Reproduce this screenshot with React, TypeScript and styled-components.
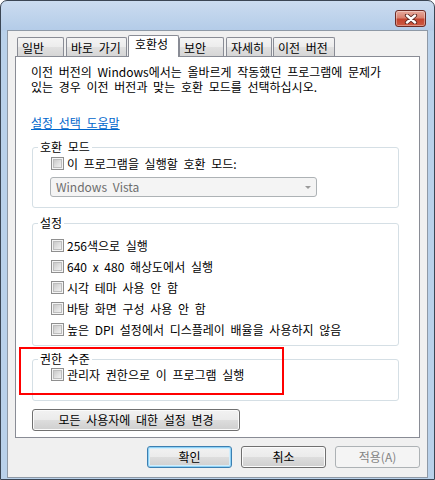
import React from 'react';
import styled, { createGlobalStyle, css } from 'styled-components';

const GlobalStyle = createGlobalStyle`
  html, body {
    margin: 0;
    padding: 0;
    background: #ffffff;
  }
  body {
    font-family: 'Noto Sans CJK KR', 'Noto Sans', sans-serif;
    font-size: 12px;
    line-height: 14px;
    color: #000000;
    word-spacing: 3px;
  }
  * {
    box-sizing: border-box;
  }
`;

const Window = styled.div`
  width: 435px;
  height: 480px;
  border: 1px solid #3b4654;
  border-radius: 7px 7px 0 0;
  background: linear-gradient(to bottom, #cbdcf0 0, #b4cce8 29px, #b9d1ea 30px, #b9d1ea 100%);
  display: flex;
  flex-direction: column;
`;

const TitleBar = styled.div`
  height: 29px;
  display: flex;
  justify-content: flex-end;
  align-items: flex-start;
  padding: 9px 8px 0 0;
`;

const CloseButton = styled.div`
  width: 31px;
  height: 17px;
  border: 1px solid #6c2b25;
  border-radius: 3px;
  background: linear-gradient(to bottom, #e8aa9d 0%, #d8816f 45%, #c4442f 55%, #cc5a43 100%);
  box-shadow: inset 0 0 0 1px rgba(255, 255, 255, 0.35);
  display: flex;
  align-items: center;
  justify-content: center;
`;

const Client = styled.div`
  margin: 0 6px;
  height: 448px;
  border: 1px solid #8e99a6;
  background: #f0f0f0;
  padding: 4px 7px 0 7px;
  display: flex;
  flex-direction: column;
`;

const TabStrip = styled.div`
  height: 21px;
  display: flex;
  align-items: flex-end;
  padding-left: 2px;
  position: relative;
  z-index: 1;
`;

const Tab = styled.div<{ $w: number; $ml: number; $active?: boolean }>`
  width: ${(p) => p.$w}px;
  margin-left: ${(p) => p.$ml}px;
  height: 19px;
  border: 1px solid #898c95;
  border-bottom: none;
  border-radius: 2px 2px 0 0;
  padding: 3px 0 0 4px;
  white-space: nowrap;
  background: linear-gradient(to bottom, #f4f4f4 0%, #ececec 50%, #e0e0e0 51%, #d6d6d6 100%);

  ${(p) =>
    p.$active &&
    css`
      height: 22px;
      margin-bottom: -1px;
      padding: 1px 0 0 6px;
      background: #ffffff;
    `}
`;

const Panel = styled.div`
  height: 382px;
  border: 1px solid #898c95;
  background: #ffffff;
  padding: 7px 19px 0 16px;
`;

const DescLine = styled.div`
  height: 15px;
  line-height: 15px;
  white-space: nowrap;
  margin-left: -1px;
`;

const HelpLink = styled.a`
  display: block;
  width: fit-content;
  margin-top: 22px;
  margin-left: -1px;
  color: #0066cc;
  text-decoration: underline;
  cursor: pointer;
`;

const GroupWrap = styled.div<{ $mt: number }>`
  position: relative;
  margin-top: ${(p) => p.$mt}px;
`;

const Group = styled.fieldset`
  margin: 0;
  padding: 0;
  width: 367px;
  min-width: 0;
  border: 1px solid #d5dfe5;
  border-radius: 3px;
`;

const Legend = styled.legend`
  margin-left: 5px;
  padding: 0 2px;
  line-height: 14px;
`;

const GroupBody = styled.div<{ $pt: number; $pb: number }>`
  padding: ${(p) => p.$pt}px 8px ${(p) => p.$pb}px 18px;
  display: flex;
  flex-direction: column;
  gap: 6px;
`;

const CheckRow = styled.label`
  height: 15px;
  display: flex;
  align-items: center;
  gap: 3px;
  white-space: nowrap;
`;

const CheckBox = styled.span`
  width: 13px;
  height: 13px;
  flex: none;
  border: 1px solid #8f8f8f;
  background: #f4f4f4;
  padding: 1px;
  display: flex;

  &::after {
    content: '';
    flex: 1;
    border: 1px solid #bdbdbd;
    background: linear-gradient(135deg, #c9c9c9 0%, #e2e2e2 60%, #f0f0f0 100%);
  }
`;

const Combo = styled.div`
  width: 267px;
  height: 20px;
  margin-left: -1px;
  border: 1px solid #adb2b5;
  border-radius: 3px;
  background: #f4f4f4;
  color: #6d6d6d;
  display: flex;
  align-items: center;
  justify-content: space-between;
  padding: 0 5px 0 5px;
`;

const ComboArrow = styled.span`
  width: 0;
  height: 0;
  border-left: 3px solid transparent;
  border-right: 3px solid transparent;
  border-top: 3px solid #9a9a9a;
`;

const Highlight = styled.div`
  position: absolute;
  left: -13px;
  top: -5px;
  width: 265px;
  height: 48px;
  border: 2px solid #ff0000;
  pointer-events: none;
`;

const Button = styled.div<{ $w: number; $variant?: 'default' | 'disabled' }>`
  width: ${(p) => p.$w}px;
  height: 22px;
  border: 1px solid #707070;
  border-radius: 3px;
  background: linear-gradient(to bottom, #f2f2f2 0%, #ebebeb 50%, #dddddd 51%, #cfcfcf 100%);
  box-shadow: inset 0 0 0 1px #fbfbfb;
  display: flex;
  align-items: center;
  justify-content: center;
  white-space: nowrap;

  ${(p) =>
    p.$variant === 'default' &&
    css`
      border-color: #3c7fb1;
      box-shadow: inset 0 0 0 1px #8fd2f6, inset 0 0 0 2px #d3eefc;
    `}

  ${(p) =>
    p.$variant === 'disabled' &&
    css`
      border-color: #adb2b5;
      background: #f4f4f4;
      box-shadow: none;
      color: #838383;
    `}
`;

const WideButton = styled(Button)`
  margin-top: 8px;
`;

const ButtonRow = styled.div`
  margin-top: 8px;
  display: flex;
  justify-content: flex-end;
  gap: 9px;
`;

const tabs = [
  { label: '일반', w: 47, ml: 0 },
  { label: '바로 가기', w: 61, ml: 2 },
  { label: '호환성', w: 51, ml: 1, active: true },
  { label: '보안', w: 45, ml: 0 },
  { label: '자세히', w: 46, ml: 2 },
  { label: '이전 버전', w: 62, ml: 1 },
];

const settings = [
  '256색으로 실행',
  '640 x 480 해상도에서 실행',
  '시각 테마 사용 안 함',
  '바탕 화면 구성 사용 안 함',
  '높은 DPI 설정에서 디스플레이 배율을 사용하지 않음',
];

const App = () => {
  return (
    <>
      <GlobalStyle />
      <Window>
        <TitleBar>
          <CloseButton>
            <svg width='14' height='10' viewBox='0 0 14 10'>
              <path d='M3 1.5 L11 8.5 M11 1.5 L3 8.5' stroke='#5b2620' strokeWidth='4.2' strokeLinecap='round' />
              <path d='M3 1.5 L11 8.5 M11 1.5 L3 8.5' stroke='#ffffff' strokeWidth='2.4' strokeLinecap='round' />
            </svg>
          </CloseButton>
        </TitleBar>
        <Client>
          <TabStrip>
            {tabs.map((t) => (
              <Tab key={t.label} $w={t.w} $ml={t.ml} $active={t.active}>
                {t.label}
              </Tab>
            ))}
          </TabStrip>
          <Panel>
            <DescLine>이전 버전의 Windows에서는 올바르게 작동했던 프로그램에 문제가</DescLine>
            <DescLine>있는 경우 이전 버전과 맞는 호환 모드를 선택하십시오.</DescLine>
            <HelpLink>설정 선택 도움말</HelpLink>

            <GroupWrap $mt={10}>
              <Group>
                <Legend>호환 모드</Legend>
                <GroupBody $pt={2} $pb={10}>
                  <CheckRow>
                    <CheckBox />
                    이 프로그램을 실행할 호환 모드:
                  </CheckRow>
                  <Combo>
                    Windows Vista
                    <ComboArrow />
                  </Combo>
                </GroupBody>
              </Group>
            </GroupWrap>

            <GroupWrap $mt={8}>
              <Group>
                <Legend>설정</Legend>
                <GroupBody $pt={8} $pb={8}>
                  {settings.map((s) => (
                    <CheckRow key={s}>
                      <CheckBox />
                      {s}
                    </CheckRow>
                  ))}
                </GroupBody>
              </Group>
            </GroupWrap>

            <GroupWrap $mt={6}>
              <Group>
                <Legend>권한 수준</Legend>
                <GroupBody $pt={1} $pb={18}>
                  <CheckRow>
                    <CheckBox />
                    관리자 권한으로 이 프로그램 실행
                  </CheckRow>
                </GroupBody>
              </Group>
              <Highlight />
            </GroupWrap>

            <WideButton $w={208}>모든 사용자에 대한 설정 변경</WideButton>
          </Panel>
          <ButtonRow>
            <Button $w={85} $variant='default'>
              확인
            </Button>
            <Button $w={85}>취소</Button>
            <Button $w={85} $variant='disabled'>
              적용(A)
            </Button>
          </ButtonRow>
        </Client>
      </Window>
    </>
  );
};

export default App;
